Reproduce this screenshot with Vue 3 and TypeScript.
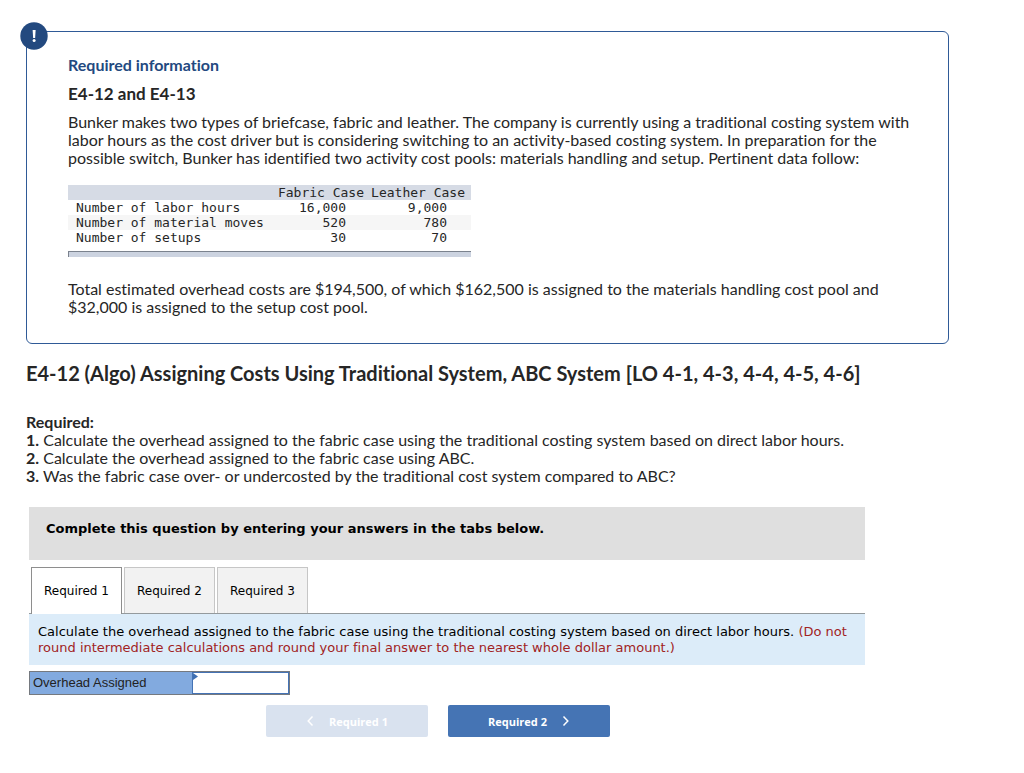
<script setup lang="ts">
import { ref } from 'vue'

interface DataRow {
  label: string
  fabric: string
  leather: string
}

const rows: DataRow[] = [
  { label: 'Number of labor hours', fabric: '16,000', leather: '9,000' },
  { label: 'Number of material moves', fabric: '520', leather: '780' },
  { label: 'Number of setups', fabric: '30', leather: '70' },
]

const tasks: string[] = [
  'Calculate the overhead assigned to the fabric case using the traditional costing system based on direct labor hours.',
  'Calculate the overhead assigned to the fabric case using ABC.',
  'Was the fabric case over- or undercosted by the traditional cost system compared to ABC?',
]

const tabs: string[] = ['Required 1', 'Required 2', 'Required 3']
const active = ref(0)
const overhead = ref('')
</script>

<template>
  <main class="page">
    <section class="info">
      <span class="badge" aria-hidden="true">
        <svg viewBox="0 0 28 28" width="28" height="28">
          <circle cx="14" cy="14" r="13.7" fill="#23497f" />
          <path d="M12.6 8h3l-.5 8h-2z" fill="#fff" />
          <circle cx="14.1" cy="18.6" r="1.5" fill="#fff" />
        </svg>
      </span>
      <h2 class="info-title">Required information</h2>
      <h3 class="info-sub">E4-12 and E4-13</h3>
      <p class="text">
        Bunker makes two types of briefcase, fabric and leather. The company is currently using a traditional costing system with
        labor hours as the cost driver but is considering switching to an activity-based costing system. In preparation for the
        possible switch, Bunker has identified two activity cost pools: materials handling and setup. Pertinent data follow:
      </p>
      <table class="data">
        <colgroup>
          <col />
          <col class="col-fabric" />
          <col class="col-leather" />
        </colgroup>
        <thead>
          <tr>
            <td></td>
            <th scope="col">Fabric Case</th>
            <th scope="col">Leather Case</th>
          </tr>
        </thead>
        <tbody>
          <tr v-for="row in rows" :key="row.label">
            <th scope="row">{{ row.label }}</th>
            <td>{{ row.fabric }}</td>
            <td>{{ row.leather }}</td>
          </tr>
        </tbody>
      </table>
      <div class="data-bar"></div>
      <p class="text">
        Total estimated overhead costs are $194,500, of which $162,500 is assigned to the materials handling cost pool and
        $32,000 is assigned to the setup cost pool.
      </p>
    </section>

    <h1 class="heading">E4-12 (Algo) Assigning Costs Using Traditional System, ABC System [LO 4-1, 4-3, 4-4, 4-5, 4-6]</h1>

    <section class="text required">
      <b>Required:</b>
      <div v-for="(task, i) in tasks" :key="i"><b>{{ i + 1 }}.</b> {{ task }}</div>
    </section>

    <section class="work">
      <div class="banner">Complete this question by entering your answers in the tabs below.</div>
      <div class="tabs" role="tablist">
        <button
          v-for="(tab, i) in tabs"
          :key="tab"
          type="button"
          role="tab"
          class="tab"
          :class="{ active: i === active }"
          :aria-selected="i === active"
          @click="active = i"
        >{{ tab }}</button>
      </div>
      <p class="prompt">
        Calculate the overhead assigned to the fabric case using the traditional costing system based on direct labor hours.
        <span class="note">(Do not round intermediate calculations and round your final answer to the nearest whole dollar amount.)</span>
      </p>
      <div class="answer">
        <label for="overhead">Overhead Assigned</label>
        <span class="field">
          <input id="overhead" v-model="overhead" type="text" autocomplete="off" />
          <svg class="mark" viewBox="0 0 5 7" width="5" height="7" aria-hidden="true"><path d="M0 0L5 3.5L0 7z" fill="#3f6fb2" /></svg>
        </span>
      </div>
      <nav class="nav">
        <button type="button" class="step" disabled>
          <svg viewBox="0 0 8 10" width="8" height="10" aria-hidden="true"><path d="M6.5 .6L2.2 5L6.5 9.4" /></svg>
          <span>Required 1</span>
        </button>
        <button type="button" class="step">
          <span>Required 2</span>
          <svg viewBox="0 0 8 10" width="8" height="10" aria-hidden="true"><path d="M1.5 .6L5.8 5L1.5 9.4" /></svg>
        </button>
      </nav>
    </section>
  </main>
</template>

<style>
body {
  margin: 0;
  background: #fff;
}
</style>

<style scoped>
.page {
  box-sizing: border-box;
  padding: 31px 75px 36px 26px;
  color: #262626;
  font-family: Lato, "Open Sans", sans-serif;
  font-variant-ligatures: none;
}
h1, h2, h3, p {
  margin: 0;
}
.info {
  position: relative;
  box-sizing: border-box;
  padding: 23px 26px 27px 41px;
  border: 1px solid #2f5a97;
  border-radius: 6px;
}
.badge {
  position: absolute;
  top: -10px;
  left: -7px;
  display: flex;
}
.info-title {
  color: #23497f;
  font-size: 16px;
  line-height: 20px;
}
.info-sub {
  margin-top: 9px;
  font-size: 17px;
  line-height: 20px;
}
.text {
  font-size: 16px;
  line-height: 18px;
}
.info-sub + .text {
  margin-top: 9px;
}
.data {
  width: 403px;
  margin-top: 18px;
  border-collapse: collapse;
  table-layout: fixed;
  font: 13px/15px "DejaVu Sans Mono", monospace;
}
.col-fabric {
  width: 110px;
}
.col-leather {
  width: 101px;
}
.data th, .data td {
  padding: 0;
  font-weight: normal;
  text-align: right;
  white-space: nowrap;
}
.data thead {
  background: #d6dbe5;
}
.data thead th {
  padding-right: 6px;
}
.data tbody th {
  padding-left: 8px;
  text-align: left;
}
.data tbody td {
  padding-right: 24px;
}
.data tbody tr:nth-child(2) {
  background: #f6f6f6;
}
.data-bar {
  box-sizing: border-box;
  width: 403px;
  height: 6px;
  margin: 6px 0 23px;
  border-top: 1px solid #7b828e;
  border-left: 1px solid #7b828e;
  background: #ccd3e0;
}
.heading {
  margin-top: 17px;
  font-size: 20px;
  line-height: 24px;
}
.required {
  margin-top: 28px;
}
.work {
  margin: 22px 84px 0 3px;
  color: #000;
  font-family: "DejaVu Sans", Verdana, sans-serif;
  font-size: 13px;
}
.banner {
  padding: 14px 17px 23px;
  background: #dfdfdf;
  font-weight: bold;
  line-height: 16px;
}
.tabs {
  display: flex;
  gap: 2px;
  margin-top: 7px;
  padding-left: 2px;
  border-bottom: 1px solid #949a9d;
  font-size: 12px;
}
.tab {
  box-sizing: border-box;
  width: 91px;
  height: 46px;
  padding: 0;
  border: 1px solid #c6c6c6;
  border-bottom: 0;
  background: #f2f2f2;
  color: #000;
  font: inherit;
}
.tab.active {
  height: 47px;
  margin-bottom: -1px;
  border-color: #8e8e8e;
  background: #fff;
}
.prompt {
  padding: 10px 9px 9px;
  background: #dcecf9;
  line-height: 16px;
}
.note {
  color: #a12323;
}
.answer {
  display: flex;
  box-sizing: border-box;
  width: 261px;
  height: 24px;
  margin-top: 6px;
  border: 1px solid #75797f;
}
.answer label {
  box-sizing: border-box;
  width: 162px;
  padding-left: 3px;
  background: #82aadf;
  color: #222;
  font: 13px/22px "Liberation Sans", Arial, sans-serif;
}
.field {
  position: relative;
  display: flex;
  flex: 1;
}
.field input {
  box-sizing: border-box;
  width: 100%;
  padding: 0 6px;
  border: 1px solid #4473b5;
  border-radius: 0;
  background: #fff;
  font: 13px "Liberation Sans", Arial, sans-serif;
}
.mark {
  position: absolute;
  top: 1px;
  left: 1px;
}
.nav {
  display: flex;
  justify-content: center;
  gap: 20px;
  margin-top: 10px;
  padding-right: 18px;
}
.step {
  display: flex;
  align-items: center;
  justify-content: center;
  gap: 15px;
  width: 162px;
  height: 32px;
  padding: 0;
  border: 0;
  border-radius: 2px;
  background: #4574b4;
  color: #fff;
  font: bold 11px "Open Sans", sans-serif;
}
.step:disabled {
  background: #d9e2ef;
}
.step svg {
  fill: none;
  stroke: currentColor;
  stroke-width: 1.5;
}
</style>
